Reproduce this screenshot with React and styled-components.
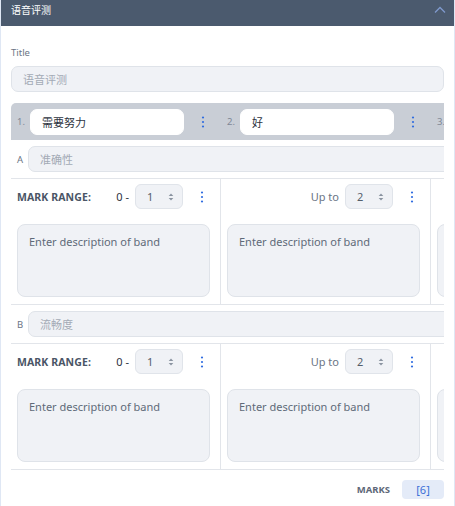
import React from 'react';
import styled, { createGlobalStyle } from 'styled-components';

const GlobalStyle = createGlobalStyle`
  html, body {
    margin: 0;
    height: 100%;
  }
  body {
    font-family: "Noto Sans", "Noto Sans CJK SC", sans-serif;
    background: #fff;
  }
  #root {
    height: 100%;
  }
`;

const Panel = styled.div`
  box-sizing: border-box;
  width: 455px;
  min-height: 100%;
  border-left: 1px solid #dfe7f4;
  border-right: 1px solid #dfe7f4;
  background: #fff;
`;

const Header = styled.div`
  box-sizing: border-box;
  height: 26px;
  background: #4b5a6e;
  display: flex;
  align-items: center;
  justify-content: space-between;
  padding: 0 8px 6px 10px;
  color: #fff;
  font-size: 10px;
  line-height: 14px;
`;

const Body = styled.div`
  padding: 0 10px;
`;

const Label = styled.div`
  margin-top: 20px;
  font-size: 9.5px;
  line-height: 14px;
  color: #6b7585;
`;

const Field = styled.input`
  box-sizing: border-box;
  display: block;
  width: ${p => p.$width || '100%'};
  height: 26px;
  margin: ${p => p.$margin || '0'};
  padding: 0 11px;
  flex: ${p => p.$flex || 'none'};
  border: 1px solid ${p => (p.$white ? '#fff' : '#dfe3e9')};
  border-radius: 7px;
  background: ${p => (p.$white ? '#fff' : '#f0f2f6')};
  font-family: inherit;
  font-size: 11px;
  color: #2d3340;
  outline: none;
  &::placeholder {
    color: #a3aab5;
  }
`;

const Grid = styled.div`
  margin-top: 11px;
  overflow: hidden;
`;

const Track = styled.div`
  width: 640px;
`;

const BandRow = styled.div`
  display: flex;
  height: 37px;
  background: #c9ced6;
  border-radius: 5px 0 0 0;
`;

const BandCell = styled.div`
  width: 210px;
  flex: none;
  display: flex;
  align-items: center;
  padding-left: 6px;
  box-sizing: border-box;
`;

const Num = styled.span`
  width: 13px;
  flex: none;
  font-size: 9.5px;
  color: #7f8896;
`;

const KebabBox = styled.div`
  flex: ${p => (p.$grow ? 1 : 'none')};
  width: 37px;
  display: flex;
  justify-content: center;
  align-items: center;
`;

const CriterionRow = styled.div`
  display: flex;
  align-items: center;
  height: 38px;
  padding-left: 6px;
  border-bottom: 1px solid #e2e5ea;
`;

const Letter = styled.span`
  width: 11px;
  flex: none;
  font-size: 9.5px;
  color: #6b7585;
`;

const MarksRow = styled.div`
  display: flex;
  border-bottom: 1px solid #e2e5ea;
`;

const MarkCell = styled.div`
  box-sizing: border-box;
  width: 210px;
  flex: none;
  padding: 5px 0 7px 6px;
  border-right: 1px solid #e2e5ea;
`;

const RangeLine = styled.div`
  display: flex;
  align-items: center;
  height: 25px;
`;

const RangeLabel = styled.span`
  font-size: 10.5px;
  font-weight: 700;
  color: #4a5566;
  letter-spacing: 0.1px;
`;

const RangeText = styled.span`
  margin-left: auto;
  margin-right: 6px;
  font-size: 11px;
  color: ${p => (p.$muted ? '#6b7585' : '#2d3340')};
`;

const Stepper = styled.div`
  box-sizing: border-box;
  width: 48px;
  height: 25px;
  display: flex;
  align-items: center;
  justify-content: space-between;
  padding: 0 8px 0 11px;
  background: #f0f2f6;
  border: 1px solid #e0e4ea;
  border-radius: 6px;
  font-size: 11px;
  color: #555e6b;
`;

const Desc = styled.textarea`
  box-sizing: border-box;
  display: block;
  width: calc(100% - 10px);
  height: 73px;
  margin-top: 15px;
  padding: 9px 11px;
  resize: none;
  background: #f0f2f6;
  border: 1px solid #dfe3e9;
  border-radius: 8px;
  font-family: inherit;
  font-size: 11px;
  color: #2d3340;
  outline: none;
  &::placeholder {
    color: #5f6a79;
  }
`;

const Footer = styled.div`
  display: flex;
  justify-content: flex-end;
  align-items: center;
  padding-top: 10px;
  gap: 12px;
`;

const MarksLabel = styled.span`
  font-size: 9.5px;
  font-weight: 700;
  color: #5e6878;
`;

const Pill = styled.span`
  width: 42px;
  height: 19px;
  display: flex;
  align-items: center;
  justify-content: center;
  background: #e4ebf8;
  border-radius: 4px;
  font-size: 11px;
  color: #3c6fd7;
`;

const Kebab = () => (
  <svg width="4" height="14" viewBox="0 0 4 14">
    <circle cx="2" cy="2.5" r="1.1" fill="#2f6ce0" />
    <circle cx="2" cy="7" r="1.1" fill="#2f6ce0" />
    <circle cx="2" cy="11.5" r="1.1" fill="#2f6ce0" />
  </svg>
);

const Arrows = () => (
  <svg width="6" height="10" viewBox="0 0 6 10">
    <path d="M3 1.5 L5.3 4 H0.7 Z" fill="#8a93a0" />
    <path d="M3 8.5 L5.3 6 H0.7 Z" fill="#8a93a0" />
  </svg>
);

const bands = ['需要努力', '好', '很好'];
const criteria = [
  { letter: 'A', name: '准确性' },
  { letter: 'B', name: '流畅度' },
];

// the third band only peeks in at the right edge, so its cell carries no text
function MarkCells() {
  return (
    <MarksRow>
      {bands.map((_, i) => {
        const peek = i === bands.length - 1;
        return (
          <MarkCell key={i}>
            <RangeLine>
              {i === 0 && <RangeLabel>MARK RANGE:</RangeLabel>}
              {!peek && (
                <>
                  <RangeText $muted={i > 0}>{i === 0 ? '0 -' : 'Up to'}</RangeText>
                  <Stepper>
                    {i + 1}
                    <Arrows />
                  </Stepper>
                  <KebabBox>
                    <Kebab />
                  </KebabBox>
                </>
              )}
            </RangeLine>
            <Desc placeholder={peek ? '' : 'Enter description of band'} />
          </MarkCell>
        );
      })}
    </MarksRow>
  );
}

export default function App() {
  return (
    <>
      <GlobalStyle />
      <Panel>
        <Header>
          <span>语音评测</span>
          <svg width="12" height="8" viewBox="0 0 12 8">
            <polyline points="1,6.5 6,1.5 11,6.5" fill="none" stroke="#7f99cc" strokeWidth="1.3" />
          </svg>
        </Header>
        <Body>
          <Label>Title</Label>
          <Field $margin="6px 0 0" placeholder="语音评测" />
          <Grid>
            <Track>
              <BandRow>
                {bands.map((b, i) => (
                  <BandCell key={i}>
                    <Num>{i + 1}.</Num>
                    <Field $white $width="154px" defaultValue={b} />
                    <KebabBox $grow>
                      <Kebab />
                    </KebabBox>
                  </BandCell>
                ))}
              </BandRow>
              {criteria.map(c => (
                <React.Fragment key={c.letter}>
                  <CriterionRow>
                    <Letter>{c.letter}</Letter>
                    <Field $flex="1" placeholder={c.name} />
                  </CriterionRow>
                  <MarkCells />
                </React.Fragment>
              ))}
            </Track>
          </Grid>
          <Footer>
            <MarksLabel>MARKS</MarksLabel>
            <Pill>[6]</Pill>
          </Footer>
        </Body>
      </Panel>
    </>
  );
}
